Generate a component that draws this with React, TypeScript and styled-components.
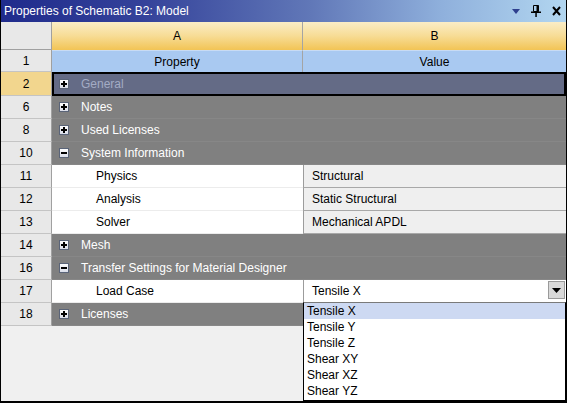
import React from "react";
import styled, { createGlobalStyle } from "styled-components";

const Global = createGlobalStyle`
  html, body { margin: 0; padding: 0; background: #f0f0f0; }
  body { font-family: "Liberation Sans", Arial, sans-serif; font-size: 12px; }
  * { box-sizing: border-box; }
`;

const Window = styled.div`
  width: 567px;
  height: 403px;
  display: flex;
  flex-direction: column;
  background: #f0f0f0;
  border-left: 1px solid #000;
  border-right: 1px solid #000;
  border-bottom: 2px solid #000;
  overflow: hidden;
`;

const TitleBar = styled.div`
  height: 22px;
  flex: none;
  display: flex;
  align-items: center;
  padding: 0 0 0 3px;
  background: linear-gradient(90deg, #1f2b8c 0%, #34429a 25%, #6178b8 55%, #8fb0dc 78%, #b2d6f0 100%);
  color: #fff;
  font-size: 12px;
`;

const Title = styled.span`
  flex: 1;
  white-space: nowrap;
`;

const TitleIcons = styled.div`
  display: flex;
  align-items: center;
`;

const IconSlot = styled.span`
  width: 20px;
  display: flex;
  justify-content: center;
  align-items: center;
`;

const Grid = styled.div`
  display: flex;
  flex-direction: column;
`;

const Row = styled.div<{ $h?: number }>`
  display: grid;
  grid-template-columns: 51px 251px 1fr;
  height: ${(p) => p.$h ?? 23}px;
`;

const NumCell = styled.div<{ $sel?: boolean }>`
  background: ${(p) => (p.$sel ? "#f2d68e" : "#e8e8e8")};
  border-right: 1px solid #a0a0a0;
  border-bottom: 1px solid #c4c4c4;
  display: flex;
  align-items: center;
  justify-content: center;
  color: #000;
`;

const HeadCell = styled.div<{ $last?: boolean }>`
  background: linear-gradient(180deg, #faedc6 0%, #f7dc95 50%, #f2c455 100%);
  border-right: ${(p) => (p.$last ? "none" : "1px solid #a4a4a4")};
  display: flex;
  align-items: center;
  justify-content: center;
  color: #000;
`;

const TitleCell = styled.div<{ $last?: boolean }>`
  background: #a9c9f1;
  border-right: ${(p) => (p.$last ? "none" : "1px solid #a4a4a4")};
  border-top: 1px solid #c8dbf4;
  display: flex;
  align-items: center;
  justify-content: center;
  color: #000;
`;

const GroupCell = styled.div<{ $sel?: boolean }>`
  grid-column: span 2;
  display: flex;
  align-items: center;
  gap: 12px;
  padding-left: ${(p) => (p.$sel ? 5 : 7)}px;
  background: ${(p) => (p.$sel ? "#646b86" : "#808080")};
  color: ${(p) => (p.$sel ? "#a3abc4" : "#ffffff")};
  border: ${(p) => (p.$sel ? "2px solid #000" : "none")};
  border-bottom: ${(p) => (p.$sel ? "2px solid #000" : "1px solid #878787")};
  white-space: nowrap;
`;

const NameCell = styled.div`
  background: #fff;
  display: flex;
  align-items: center;
  padding-left: 44px;
  color: #000;
  border-bottom: 1px solid #ececec;
`;

const ValueCell = styled.div<{ $edit?: boolean }>`
  position: relative;
  background: ${(p) => (p.$edit ? "#fff" : "#efefef")};
  border-left: 1px solid #9c9c9c;
  border-bottom: 1px solid #a8a8a8;
  display: flex;
  align-items: center;
  padding-left: 8px;
  color: #000;
`;

const DropButton = styled.div`
  position: absolute;
  right: 1px;
  top: 1px;
  width: 17px;
  height: 18px;
  background: #d9d9d9;
  border: 1px solid #9a9a9a;
  display: flex;
  align-items: center;
  justify-content: center;
`;

const DropList = styled.div`
  position: absolute;
  top: 22px;
  left: -1px;
  right: 0;
  background: #fff;
  border: 1px solid #000;
  border-top: 1px solid #7a7a7a;
  z-index: 5;
  padding-bottom: 1px;
`;

const DropItem = styled.div<{ $hi?: boolean }>`
  height: 16px;
  line-height: 16px;
  padding-left: 3px;
  background: ${(p) => (p.$hi ? "#cdd9f2" : "transparent")};
  color: #000;
`;

const Filler = styled.div`
  flex: 1;
  background: #f0f0f0;
`;

const ExpandBox = ({ open }: { open: boolean }) => (
  <svg width="10" height="10" viewBox="0 0 10 10" style={{ flex: "none" }}>
    <defs>
      <linearGradient id="eb" x1="0" y1="0" x2="0" y2="1">
        <stop offset="0" stopColor="#ffffff" />
        <stop offset="1" stopColor="#d8dce8" />
      </linearGradient>
    </defs>
    <rect x="0.5" y="0.5" width="9" height="9" fill="url(#eb)" stroke="#5a6478" />
    <rect x="2" y="4" width="6" height="2" fill="#000" />
    {!open && <rect x="4" y="2" width="2" height="6" fill="#000" />}
  </svg>
);

type R =
  | { n: string; kind: "group"; label: string; open?: boolean; sel?: boolean }
  | { n: string; kind: "data"; label: string; value: string; edit?: boolean };

const rows: R[] = [
  { n: "2", kind: "group", label: "General", sel: true },
  { n: "6", kind: "group", label: "Notes" },
  { n: "8", kind: "group", label: "Used Licenses" },
  { n: "10", kind: "group", label: "System Information", open: true },
  { n: "11", kind: "data", label: "Physics", value: "Structural" },
  { n: "12", kind: "data", label: "Analysis", value: "Static Structural" },
  { n: "13", kind: "data", label: "Solver", value: "Mechanical APDL" },
  { n: "14", kind: "group", label: "Mesh" },
  { n: "16", kind: "group", label: "Transfer Settings for Material Designer", open: true },
  { n: "17", kind: "data", label: "Load Case", value: "Tensile X", edit: true },
  { n: "18", kind: "group", label: "Licenses" },
];

const options = ["Tensile X", "Tensile Y", "Tensile Z", "Shear XY", "Shear XZ", "Shear YZ"];

export default function App() {
  return (
    <>
      <Global />
      <Window>
        <TitleBar>
          <Title>Properties of Schematic B2: Model</Title>
          <TitleIcons>
            <IconSlot>
              <svg width="8" height="5" viewBox="0 0 8 5">
                <path d="M0 0H8L4 5Z" fill="#2e3f8e" />
              </svg>
            </IconSlot>
            <IconSlot>
              <svg width="10" height="12" viewBox="0 0 10 12">
                <path d="M2.5 0.5H7.5V6.5H2.5Z" fill="none" stroke="#000" />
                <rect x="5.5" y="0.5" width="2" height="6" fill="#000" />
                <rect x="0" y="6.5" width="10" height="1.5" fill="#000" />
                <rect x="4.3" y="8" width="1.5" height="4" fill="#000" />
              </svg>
            </IconSlot>
            <IconSlot>
              <svg width="9" height="10" viewBox="0 0 9 10">
                <path d="M1 1L8 9M8 1L1 9" stroke="#000" strokeWidth="2" />
              </svg>
            </IconSlot>
          </TitleIcons>
        </TitleBar>
        <Grid>
          <Row $h={28}>
            <NumCell style={{ borderBottom: "1px solid #a0a0a0" }} />
            <HeadCell>A</HeadCell>
            <HeadCell $last>B</HeadCell>
          </Row>
          <Row $h={22}>
            <NumCell>1</NumCell>
            <TitleCell>Property</TitleCell>
            <TitleCell $last>Value</TitleCell>
          </Row>
          {rows.map((r) =>
            r.kind === "group" ? (
              <Row key={r.n} $h={r.sel ? 24 : 23}>
                <NumCell $sel={r.sel}>{r.n}</NumCell>
                <GroupCell $sel={r.sel}>
                  <ExpandBox open={!!r.open} />
                  <span>{r.label}</span>
                </GroupCell>
              </Row>
            ) : (
              <Row key={r.n}>
                <NumCell>{r.n}</NumCell>
                <NameCell>{r.label}</NameCell>
                <ValueCell $edit={r.edit}>
                  {r.value}
                  {r.edit && (
                    <>
                      <DropButton>
                        <svg width="9" height="5" viewBox="0 0 9 5">
                          <path d="M0 0H9L4.5 5Z" fill="#000" />
                        </svg>
                      </DropButton>
                      <DropList>
                        {options.map((o, i) => (
                          <DropItem key={o} $hi={i === 0}>
                            {o}
                          </DropItem>
                        ))}
                      </DropList>
                    </>
                  )}
                </ValueCell>
              </Row>
            )
          )}
        </Grid>
        <Filler />
      </Window>
    </>
  );
}
